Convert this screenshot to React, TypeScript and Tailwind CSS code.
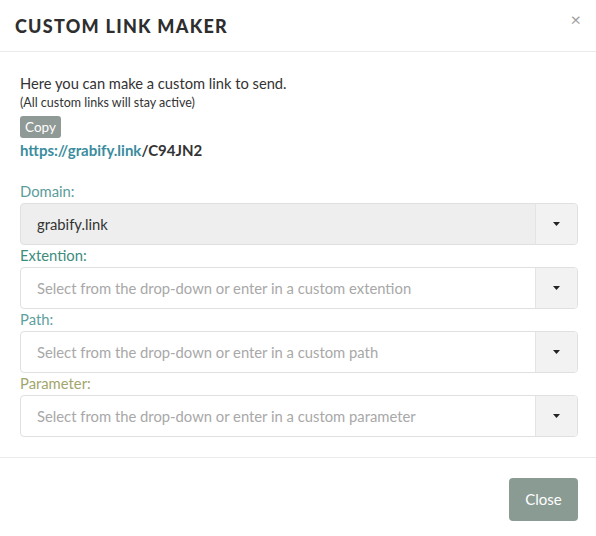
import React from "react";

const Caret = () => (
  <svg width="7" height="4" viewBox="0 0 7 4" className="block">
    <path d="M0 0 L7 0 L3.5 4 Z" fill="#222" />
  </svg>
);

function Field({
  label,
  labelColor,
  value,
  placeholder,
  disabled,
}: {
  label: string;
  labelColor: string;
  value?: string;
  placeholder?: string;
  disabled?: boolean;
}) {
  return (
    <div className="flex flex-col">
      <div className={`text-[14.8px] leading-[20px] h-[20px] ${labelColor}`}>{label}</div>
      <div
        className={`flex h-[42px] rounded-[4px] border border-[#e0e0e0] mt-[2px] overflow-hidden ${
          disabled ? "bg-[#eeeeee]" : "bg-white"
        }`}
      >
        <div className="flex-1 flex items-center pl-[16px] text-[14.8px]">
          {value ? (
            <span className="text-[#333]">{value}</span>
          ) : (
            <span className="text-[#a8a8a8]">{placeholder}</span>
          )}
        </div>
        <div className="w-[42px] flex items-center justify-center bg-[#f2f2f2] border-l border-[#e4e4e4]">
          <Caret />
        </div>
      </div>
    </div>
  );
}

export default function App() {
  return (
    <div
      className="w-[596px] h-[536px] bg-white flex flex-col text-[#333]"
      style={{ fontFamily: "Lato, 'Open Sans', sans-serif" }}
    >
      <div className="h-[52px] border-b border-[#eaeaea] flex items-center justify-between pl-[15px] pr-[15px]">
        <div
          className="text-[18px] font-black tracking-[0.07em] text-[#2e2e2e] pt-[2px]"
          style={{ fontFamily: "Lato, sans-serif" }}
        >
          CUSTOM LINK MAKER
        </div>
        <div className="text-[#a0a0a0] text-[18px] leading-none -mt-[14px]">×</div>
      </div>
      <div className="flex flex-col pl-[20px] pr-[18px] pt-[21px]">
        <div className="text-[14.7px] leading-[20px]">Here you can make a custom link to send.</div>
        <div className="text-[12.5px] leading-[16px] mt-[2px]">(All custom links will stay active)</div>
        <div className="mt-[3px]">
          <span className="inline-block bg-[#8f9995] text-white text-[13.5px] leading-[22px] px-[5px] rounded-[3px]">
            Copy
          </span>
        </div>
        <div className="text-[15px] leading-[20px] font-bold mt-[2px]">
          <span className="text-[#3a8c9e]">https://grabify.link</span>
          <span className="text-[#333]">/C94JN2</span>
        </div>
        <div className="flex flex-col mt-[21px]">
          <Field label="Domain:" labelColor="text-[#5a9c9a]" value="grabify.link" disabled />
          <Field
            label="Extention:"
            labelColor="text-[#3d8c7c]"
            placeholder="Select from the drop-down or enter in a custom extention"
          />
          <Field
            label="Path:"
            labelColor="text-[#5fa0a0]"
            placeholder="Select from the drop-down or enter in a custom path"
          />
          <Field
            label="Parameter:"
            labelColor="text-[#a2a66a]"
            placeholder="Select from the drop-down or enter in a custom parameter"
          />
        </div>
      </div>
      <div className="mt-[20px] border-t border-[#eaeaea] flex justify-end pr-[18px] pt-[20px]">
        <button className="w-[69px] h-[43px] rounded-[4px] bg-[#8a9b94] text-white text-[15px]">
          Close
        </button>
      </div>
    </div>
  );
}
